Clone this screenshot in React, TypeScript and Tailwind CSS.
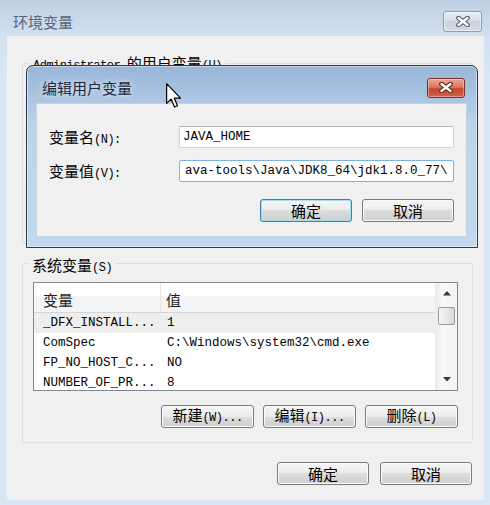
import React from "react";

const cjk = "font-['Noto_Sans_CJK_SC',sans-serif]";
const mono = "font-['Liberation_Mono','Noto_Sans_CJK_SC',monospace]";

const Label = ({ zh, en }: { zh: string; en?: string }) => (
  <span className="inline-flex items-baseline whitespace-nowrap text-black">
    <span className={`${cjk} text-[15px] leading-[20px]`}>{zh}</span>
    {en && <span className={`${mono} text-[12px] leading-[20px] tracking-[-0.5px]`}>{en}</span>}
  </span>
);

const Button = ({
  zh,
  en,
  primary,
  wide,
}: {
  zh: string;
  en?: string;
  primary?: boolean;
  wide?: boolean;
}) => (
  <button
    className={
      (primary
        ? "border-[#3c7fb1] shadow-[inset_0_0_0_1px_#a6dcf8] "
        : "border-[#7a7a7a] shadow-[inset_0_0_0_1px_#fbfbfb] ") +
      (wide ? "w-[93px] " : "w-[92px] ") +
      "h-[23px] rounded-[3px] border flex items-center justify-center bg-[linear-gradient(to_bottom,#f6f6f6_0%,#ebebeb_50%,#dddddd_50%,#cfcfcf_100%)]"
    }
  >
    <Label zh={zh} en={en} />
  </button>
);

const CloseButton = ({ red }: { red?: boolean }) => (
  <div
    className={
      red
        ? "w-[38px] h-[20px] rounded-[3px] border border-[#7b3329] flex items-center justify-center bg-[linear-gradient(to_bottom,#e8a898_0%,#d97862_45%,#c5442c_55%,#d0644c_100%)] shadow-[inset_0_0_0_1px_rgba(255,255,255,0.35)]"
        : "w-[39px] h-[21px] rounded-[3px] border border-[#8c9bb0] flex items-center justify-center bg-[linear-gradient(to_bottom,#e4ebf4_0%,#d3deea_50%,#c6d3e3_50%,#d0dbe8_100%)] shadow-[inset_0_0_0_1px_rgba(255,255,255,0.5)]"
    }
  >
    <svg width="16" height="11" viewBox="0 0 16 11">
      <path
        d="M3.5 2 L12.5 9 M12.5 2 L3.5 9"
        stroke={red ? "#5a2219" : "#4f5b6b"}
        strokeWidth="4.6"
        strokeLinecap="round"
      />
      <path d="M3.5 2 L12.5 9 M12.5 2 L3.5 9" stroke="#ffffff" strokeWidth="2.4" strokeLinecap="round" />
    </svg>
  </div>
);

const Arrow = ({ down }: { down?: boolean }) => (
  <svg width="8" height="5" viewBox="0 0 8 5">
    <path d={down ? "M0 0 H8 L4 4.5 Z" : "M0 4.5 H8 L4 0 Z"} fill="#3a3a3a" />
  </svg>
);

const rows: [string, string][] = [
  ["_DFX_INSTALL...", "1"],
  ["ComSpec", "C:\\Windows\\system32\\cmd.exe"],
  ["FP_NO_HOST_C...", "NO"],
  ["NUMBER_OF_PR...", "8"],
];

export default function App() {
  return (
    <div className="relative w-[490px] h-[505px] overflow-hidden flex flex-col bg-[linear-gradient(to_bottom,#bfd0e4_0px,#d2e0ef_36px,#dae6f3_80px,#dae6f3_100%)]">
      {/* outer title bar */}
      <div className="h-[36px] flex items-center justify-between pl-[13px] pr-[8px] pt-[7px]">
        <span className={`${cjk} text-[15px] leading-[20px] text-[#56667a]`}>环境变量</span>
        <CloseButton />
      </div>

      {/* outer client */}
      <div className="ml-[7px] w-[477px] h-[464px] bg-[#f0f0f0] flex flex-col">
        <div className="relative ml-[15px] mt-[27px] w-[451px] h-[181px] rounded-[3px] border border-[#d5dfe5]">
          <div className="absolute -top-[11px] left-[7px] px-[3px] bg-[#f0f0f0] flex items-baseline">
            <span className={`${mono} text-[12px] leading-[20px] whitespace-pre tracking-[-0.5px]`}>Administrator </span>
            <Label zh="的用户变量" en="(U)" />
          </div>
        </div>

        <div className="relative ml-[15px] mt-[19px] w-[451px] h-[180px] rounded-[3px] border border-[#d5dfe5] pt-[18px] pl-[10px] pr-[14px] flex flex-col">
          <div className="absolute -top-[11px] left-[6px] px-[3px] bg-[#f0f0f0]">
            <Label zh="系统变量" en="(S)" />
          </div>

          <div className="h-[109px] border border-[#828790] bg-white flex overflow-hidden">
            <div className="flex-1 flex flex-col">
              <div className="h-[30px] shrink-0 flex border-b border-[#d5d5d5] bg-[linear-gradient(to_bottom,#ffffff_0%,#ffffff_45%,#f3f4f6_45%,#f3f4f6_100%)]">
                <div className="w-[127px] pl-[9px] pt-[5px] border-r border-[#e3e5e8]">
                  <span className={`${cjk} text-[15px] leading-[20px] text-[#1e1e1e]`}>变量</span>
                </div>
                <div className="pl-[5px] pt-[5px]">
                  <span className={`${cjk} text-[15px] leading-[20px] text-[#1e1e1e]`}>值</span>
                </div>
              </div>
              {rows.map(([name, value], i) => (
                <div
                  key={name}
                  className={
                    i === 0
                      ? "h-[20px] shrink-0 flex items-center bg-[#eeeeee]"
                      : "h-[20px] shrink-0 flex items-center"
                  }
                >
                  <div className={`${mono} w-[127px] pl-[9px] text-[12.5px] text-black whitespace-pre`}>{name}</div>
                  <div className={`${mono} pl-[6px] text-[12.5px] text-black whitespace-pre`}>{value}</div>
                </div>
              ))}
            </div>
            <div className="w-[22px] flex flex-col bg-[linear-gradient(to_right,#ececec,#f8f8f8_30%,#f4f4f4)] border-l border-[#ececec]">
              <div className="h-[21px] shrink-0 flex items-center justify-center">
                <Arrow />
              </div>
              <div className="mx-[2px] mt-[3px] h-[18px] shrink-0 rounded-[2px] border border-[#9a9a9a] bg-[linear-gradient(to_right,#f6f6f6,#e6e6e6_60%,#d6d6d6)]" />
              <div className="flex-1" />
              <div className="h-[21px] shrink-0 flex items-center justify-center">
                <Arrow down />
              </div>
            </div>
          </div>

          <div className="mt-[14px] flex justify-end gap-[9px]">
            <Button zh="新建" en="(W)..." wide />
            <Button zh="编辑" en="(I)..." wide />
            <Button zh="删除" en="(L)" wide />
          </div>
        </div>

        <div className="mt-[19px] mr-[12px] self-end flex gap-[11px]">
          <Button zh="确定" />
          <Button zh="取消" />
        </div>
      </div>

      {/* edit dialog on top */}
      <div className="absolute left-[26px] top-[65px] w-[452px] h-[183px] rounded-t-[7px] border border-[#2e3742] flex flex-col bg-[linear-gradient(to_bottom,#98b6d8_0px,#aac4e2_30px,#bcd3ea_60px,#c2d8ee_100%)] shadow-[inset_0_0_0_1px_rgba(255,255,255,0.45)]">
        <div className="h-[37px] shrink-0 flex items-center justify-between pl-[15px] pr-[12px] pt-[6px]">
          <span className={`${cjk} text-[15px] leading-[20px] text-[#1c2838] [text-shadow:0_0_6px_rgba(255,255,255,0.9)]`}>
            编辑用户变量
          </span>
          <CloseButton red />
        </div>
        <div className="ml-[9px] w-[431px] h-[134px] shrink-0 bg-[#f0f0f0] border border-[#c4d3e3] px-[12px] pt-[22px] flex flex-col">
          <div className="flex items-center h-[22px]">
            <div className="w-[130px]">
              <Label zh="变量名" en="(N):" />
            </div>
            <div className={`${mono} w-[275px] h-[22px] rounded-[2px] border border-[#cdd1d8] border-t-[#b3b7bf] bg-white pl-[3px] text-[12.5px] leading-[20px] text-black whitespace-pre overflow-hidden`}>
              JAVA_HOME
            </div>
          </div>
          <div className="mt-[12px] flex items-center h-[22px]">
            <div className="w-[130px]">
              <Label zh="变量值" en="(V):" />
            </div>
            <div className={`${mono} w-[275px] h-[22px] rounded-[2px] border border-[#7fb1e2] bg-white pl-[5px] text-[12.5px] leading-[20px] text-black whitespace-pre overflow-hidden`}>
              {"ava-tools\\Java\\JDK8_64\\jdk1.8.0_77\\"}
            </div>
          </div>
          <div className="mt-[17px] flex justify-end gap-[10px]">
            <Button zh="确定" primary />
            <Button zh="取消" />
          </div>
        </div>
      </div>

      {/* mouse pointer */}
      <svg className="absolute left-[166px] top-[83px]" width="16" height="26" viewBox="0 0 13 21">
        <path
          d="M0.5 0.5 V16.5 L4.2 13 L6.9 19.4 L9.3 18.4 L6.7 12.2 L11.8 12.2 Z"
          fill="#ffffff"
          stroke="#000000"
          strokeWidth="1"
          strokeLinejoin="round"
        />
      </svg>
    </div>
  );
}
